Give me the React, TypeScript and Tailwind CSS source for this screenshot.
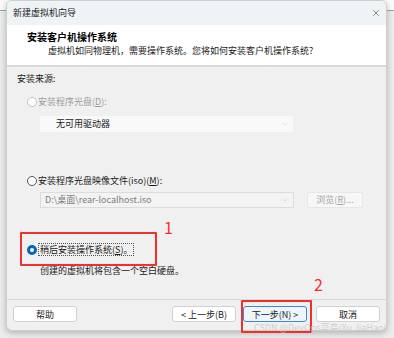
import { X, ChevronDown } from "lucide-react";

const font = { fontFamily: '"Noto Sans CJK SC", "Noto Sans", sans-serif' };

interface RadioProps {
    checked?: boolean;
    disabled?: boolean;
}

const Radio = ({ checked, disabled }: RadioProps) => {
    if (checked) {
        return <span className="w-[10px] h-[10px] rounded-full border-[3px] border-[#0067c0] bg-white shrink-0"></span>;
    }
    return (
        <span
            className={`w-[10px] h-[10px] rounded-full border bg-white shrink-0 ${disabled ? "border-[#c4c4c4]" : "border-[#5a5a5a]"}`}
        ></span>
    );
};

const Button = ({ label, primary }: { label: string; primary?: boolean }) => (
    <button
        className={`w-[64px] h-[16px] rounded-[3px] text-[9px] leading-none flex items-center justify-center text-[#1a1a1a] ${primary ? "bg-[#eef5fc] border border-[#3b8ad8]" : "bg-white border border-[#d0d0d0]"}`}
    >
        {label}
    </button>
);

const App = () => {
    return (
        <div
            style={font}
            className="relative w-[394px] h-[338px] overflow-hidden bg-[linear-gradient(to_bottom,#fbfbfb_0,#fbfbfb_10px,#a3a3a3_10px,#a3a3a3_11px,#ececec_11px)]"
        >
            <div className="ml-[6px] w-[381px] h-[331px] rounded-[6px] overflow-hidden bg-[#f0f0f0] border border-[#cfcfcf] shadow-[0_2px_6px_rgba(0,0,0,0.25)] flex flex-col">
                {/* title bar */}
                <div className="h-[24px] bg-[#eef4f6] flex items-center justify-between pl-[6px] pr-[5px]">
                    <span className="text-[9px] text-[#1a1a1a]">新建虚拟机向导</span>
                    <X size={10} strokeWidth={1.2} className="text-[#222]" />
                </div>

                {/* header */}
                <div className="h-[42px] bg-white pl-[20px] pt-[5px] border-b-2 border-[#d9d9d9]">
                    <div className="text-[10px] font-bold leading-[14px] text-black">安装客户机操作系统</div>
                    <div className="text-[9px] leading-[14px] pl-[21px] text-[#1a1a1a]">
                        虚拟机如同物理机，需要操作系统。您将如何安装客户机操作系统?
                    </div>
                </div>

                {/* body */}
                <div className="h-[232px] flex flex-col pl-[10px] pt-[6px] text-[9px] leading-[12px] text-[#1a1a1a]">
                    <div>安装来源:</div>

                    <div className="mt-[11px] ml-[10px] flex items-center gap-[1px] text-[#9d9d9d]">
                        <Radio disabled />
                        <span>安装程序光盘(<span className="underline">D</span>):</span>
                    </div>
                    <div className="mt-[8px] ml-[23px] w-[253px] h-[16px] bg-[#f9f9f9] flex items-center justify-between pl-[16px] pr-[4px]">
                        <span className="text-[#1a1a1a]">无可用驱动器</span>
                        <ChevronDown size={8} strokeWidth={1} className="text-[#b0b0b0]" />
                    </div>

                    <div className="mt-[43px] ml-[10px] flex items-center gap-[1px]">
                        <Radio />
                        <span>安装程序光盘映像文件(iso)(<span className="underline">M</span>):</span>
                    </div>
                    <div className="mt-[5px] ml-[23px] flex items-center gap-[13px]">
                        <div className="w-[254px] h-[16px] bg-[#f3f3f3] border border-[#dcdcdc] flex items-center justify-between pl-[4px] pr-[4px]">
                            <span className="text-[#7d7d7d]">D:\桌面\rear-localhost.iso</span>
                            <ChevronDown size={8} strokeWidth={1} className="text-[#b0b0b0]" />
                        </div>
                        <div className="w-[56px] h-[16px] rounded-[2px] bg-[#f7f7f7] border border-[#e6e6e6] flex items-center justify-center text-[#a6a6a6]">
                            浏览(<span className="underline">R</span>)...
                        </div>
                    </div>

                    <div className="mt-[35px] ml-[10px] flex items-center gap-[1px]">
                        <Radio checked />
                        <span className="border border-dotted border-[#555] px-[1px] leading-[11px]">
                            稍后安装操作系统(<span className="underline">S</span>)。
                        </span>
                    </div>
                    <div className="mt-[9px] ml-[23px]">创建的虚拟机将包含一个空白硬盘。</div>
                </div>

                {/* footer */}
                <div className="flex-1 border-t border-[#dadada] flex items-start pt-[6px] pl-[6px] pr-[6px]">
                    <Button label="帮助" />
                    <div className="flex-1"></div>
                    <div className="flex gap-[7px]">
                        <Button label="< 上一步(B)" />
                        <Button label="下一步(N) >" primary />
                        <div className="ml-[2px]">
                            <Button label="取消" />
                        </div>
                    </div>
                </div>
            </div>

            {/* annotations */}
            <div className="absolute left-[20px] top-[232px] w-[137px] h-[34px] border-2 border-[#f0312b] rounded-[1px]"></div>
            <div className="absolute left-[164px] top-[219px] text-[16px] leading-none text-[#f0312b]">1</div>
            <div className="absolute left-[241px] top-[300px] w-[71px] h-[33px] border-2 border-[#f0312b] rounded-[1px]"></div>
            <div className="absolute left-[314px] top-[276px] text-[16px] leading-none text-[#f0312b]">2</div>
            <div className="absolute left-[254px] top-[323px] text-[9px] leading-none text-[#c8c8c8]/90 whitespace-nowrap">
                CSDN @DevOps菜鸟(Xu JiaHao)
            </div>
        </div>
    );
};

export default App;
